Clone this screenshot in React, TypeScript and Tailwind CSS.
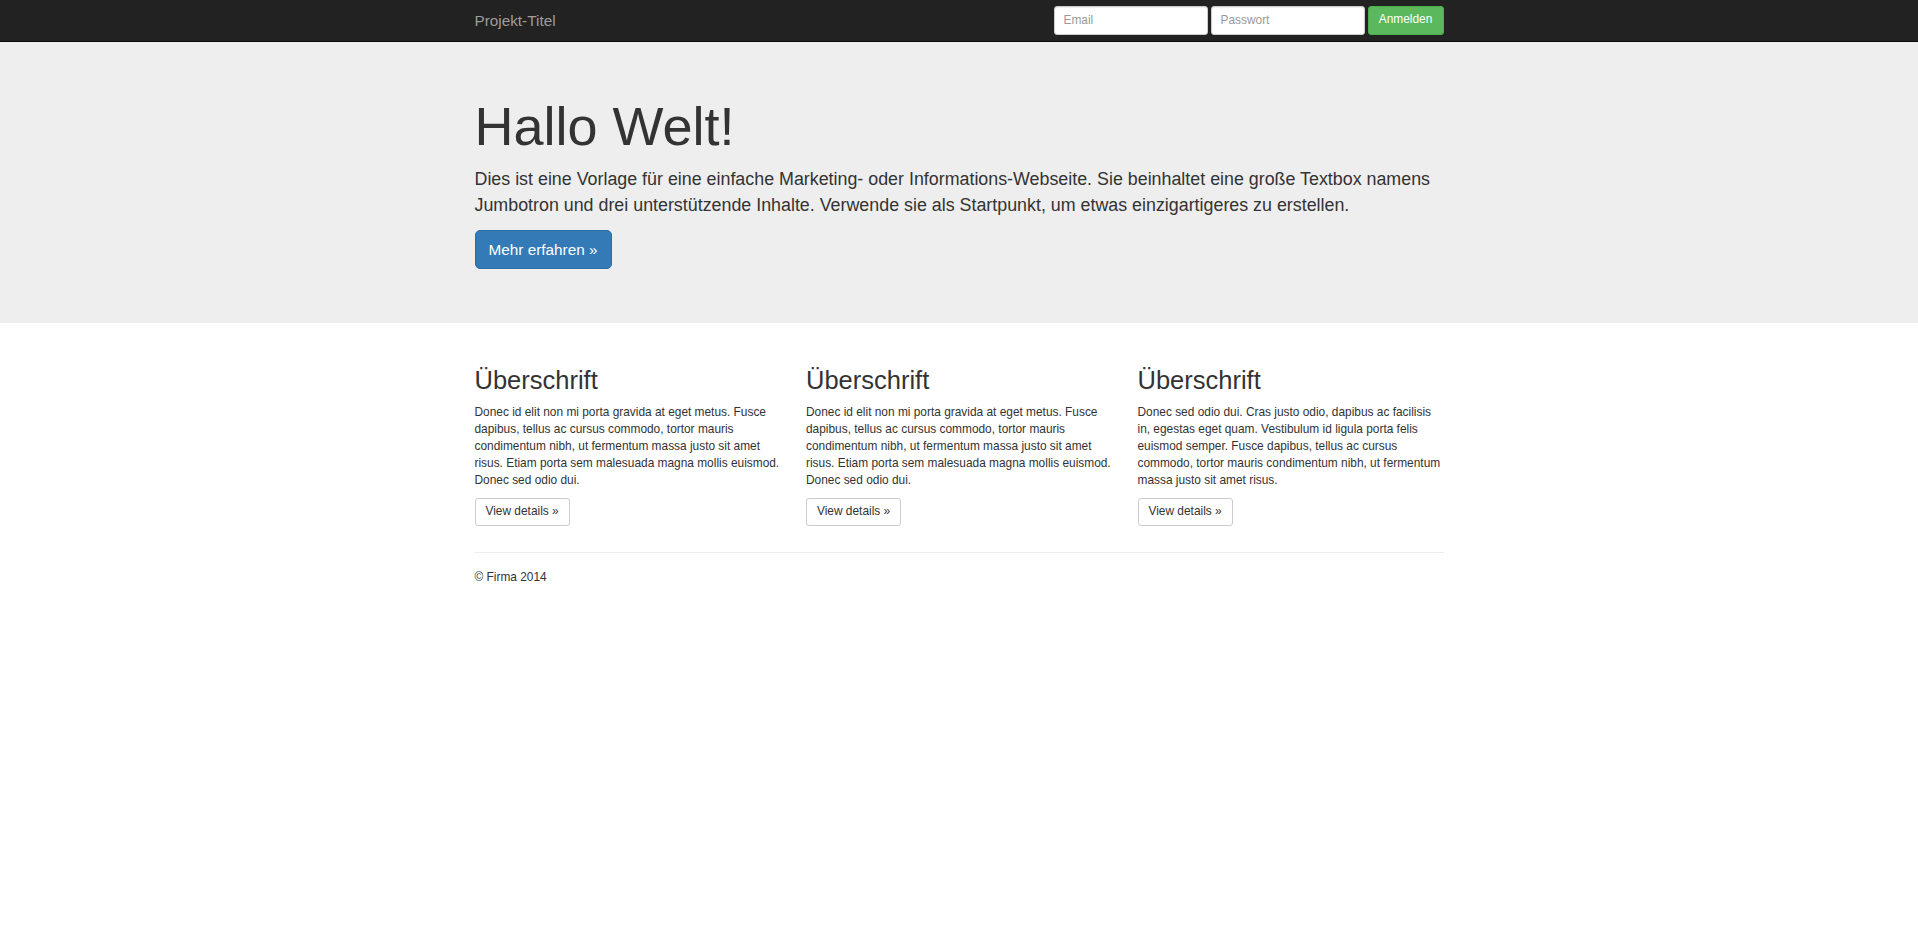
import React from "react";

const columns = [
  "Donec id elit non mi porta gravida at eget metus. Fusce dapibus, tellus ac cursus commodo, tortor mauris condimentum nibh, ut fermentum massa justo sit amet risus. Etiam porta sem malesuada magna mollis euismod. Donec sed odio dui.",
  "Donec id elit non mi porta gravida at eget metus. Fusce dapibus, tellus ac cursus commodo, tortor mauris condimentum nibh, ut fermentum massa justo sit amet risus. Etiam porta sem malesuada magna mollis euismod. Donec sed odio dui.",
  "Donec sed odio dui. Cras justo odio, dapibus ac facilisis in, egestas eget quam. Vestibulum id ligula porta felis euismod semper. Fusce dapibus, tellus ac cursus commodo, tortor mauris condimentum nibh, ut fermentum massa justo sit amet risus.",
];

const App = () => {
  return (
    <div className="min-h-screen bg-white font-['Liberation_Sans',Arial,sans-serif] text-[11.9px] leading-[17px] text-[#333]">
      {/* navbar */}
      <nav className="h-[42px] border-b border-[#080808] bg-[#222]">
        <div className="mx-auto flex h-[41px] w-[969px] items-center justify-between">
          <a href="#" className="text-[15.3px] leading-[20px] text-[#9d9d9d]">
            Projekt-Titel
          </a>
          <form className="flex items-center gap-[3px]" onSubmit={(e) => e.preventDefault()}>
            <input
              type="text"
              placeholder="Email"
              className="h-[29px] w-[154px] rounded-[3px] border border-[#ccc] bg-white px-[9px] pb-[2px] text-[11.9px] text-[#555] shadow-[inset_0_1px_1px_rgba(0,0,0,0.075)] outline-none placeholder:text-[#999]"
            />
            <input
              type="password"
              placeholder="Passwort"
              className="h-[29px] w-[154px] rounded-[3px] border border-[#ccc] bg-white px-[9px] pb-[2px] text-[11.9px] text-[#555] shadow-[inset_0_1px_1px_rgba(0,0,0,0.075)] outline-none placeholder:text-[#999]"
            />
            <button
              type="submit"
              className="h-[29px] w-[76px] rounded-[3px] border border-[#4cae4c] bg-[#5cb85c] pb-[2px] text-[11.9px] text-white"
            >
              Anmelden
            </button>
          </form>
        </div>
      </nav>

      {/* jumbotron */}
      <section className="bg-[#eee] pt-[55px] pb-[54px]">
        <div className="mx-auto w-[969px]">
          <h1 className="text-[54px] leading-[59.4px] font-normal text-[#333]">Hallo Welt!</h1>
          <p className="mt-[10px] text-[17.85px] leading-[26px]">
            Dies ist eine Vorlage für eine einfache Marketing- oder Informations-Webseite. Sie beinhaltet eine
            große Textbox namens Jumbotron und drei unterstützende Inhalte. Verwende sie als Startpunkt, um etwas
            einzigartigeres zu erstellen.
          </p>
          <a
            href="#"
            className="mt-[12px] flex h-[39px] w-[137px] items-center justify-center rounded-[5px] border border-[#2e6da4] bg-[#337ab7] text-[15.3px] text-white"
          >
            Mehr erfahren »
          </a>
        </div>
      </section>

      {/* columns */}
      <div className="mx-auto mt-[43px] w-[969px]">
        <div className="grid grid-cols-3 gap-x-[25.5px]">
          {columns.map((text, i) => (
            <div key={i}>
              <h2 className="text-[25.5px] leading-[28px] font-normal">Überschrift</h2>
              <p className="mt-[10px]">{text}</p>
              <a
                href="#"
                className="mt-[8.5px] flex h-[28px] w-fit items-center rounded-[3px] border border-[#ccc] bg-white px-[10px] text-[#333]"
              >
                View details »
              </a>
            </div>
          ))}
        </div>

        <hr className="mt-[26px] border-0 border-t border-[#eee]" />

        <footer className="mt-[16px]">
          <p>© Firma 2014</p>
        </footer>
      </div>
    </div>
  );
};

export default App;
